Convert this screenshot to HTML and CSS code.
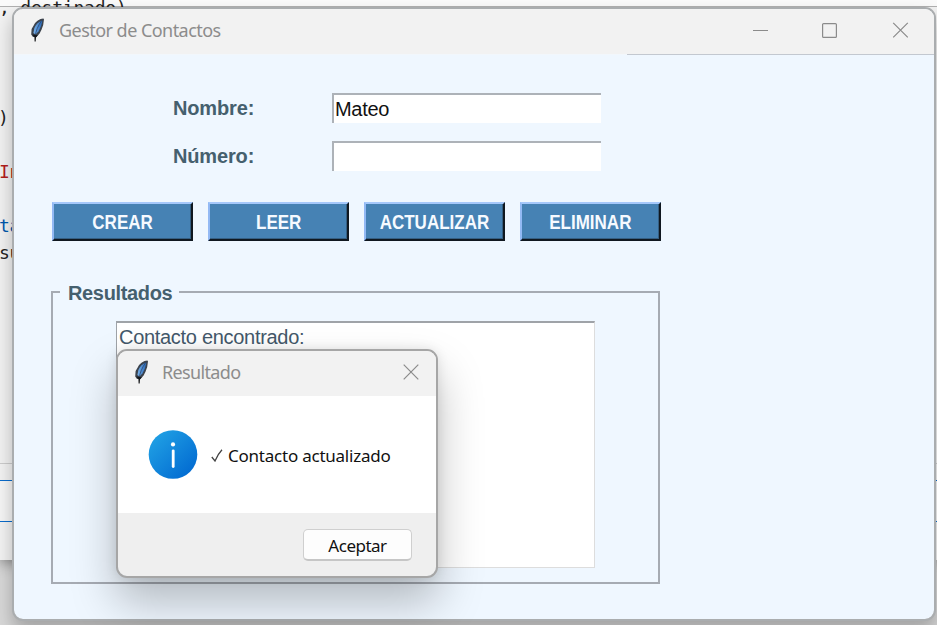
FILE: index.html
```html
<!DOCTYPE html>
<html lang="es">
<head>
<meta charset="utf-8">
<title>Gestor de Contactos</title>
<link rel="stylesheet" href="styles.css">
</head>
<body>
<svg width="0" height="0" class="defs">
  <defs>
    <linearGradient id="info" x1="0" y1="0" x2="1" y2="1"><stop offset="0.1" stop-color="#20a0e4"/><stop offset="0.95" stop-color="#0067d0"/></linearGradient>
    <linearGradient id="blue" x1="0" y1="0" x2="1" y2="0"><stop offset="0" stop-color="#79b2ea"/><stop offset="1" stop-color="#2868b8"/></linearGradient>
    <symbol id="feather" viewBox="0 0 16 24">
      <path d="M13.4 .6 C9.5 .8 5.8 3.5 3.8 7.2 L1.6 11 L1.2 16.5 L3 19 L6.5 19 L9.6 15.5 L11.6 11.5 L13.2 7 L14 1.2Z" fill="#3c434d"/>
      <path d="M12.2 2.4 C8.5 3.8 5.5 6.8 4.4 10 L3.4 15 L5.5 16.6 L8.6 13.2 L10.9 8.5 L12.2 3.8Z" fill="url(#blue)"/>
      <path d="M11.6 2.6 C8 8 5.6 13 5.1 19" fill="none" stroke="#253c60" stroke-width=".7"/>
      <path d="M2.2 16.6 L4.4 19 L4.6 23.6 L5.7 23.6 L6 19.5 L7.8 17.2Z" fill="#15171a"/>
    </symbol>
    <symbol id="close" viewBox="0 0 16 16"><path d="M.7 .7 L15.3 15.3 M15.3 .7 L.7 15.3" fill="none" stroke="#8b8b8b" stroke-width="1.2"/></symbol>
  </defs>
</svg>
<div class="desktop">
  <div class="editor">
    <div class="tabs"></div>
    <div class="code">
      <span class="ln l1">, destinado)</span>
      <span class="ln l2">)</span>
      <span class="ln l3">In</span>
      <span class="ln l4">ta</span>
      <span class="ln l5">su</span>
    </div>
    <div class="bar"></div>
    <div class="prompt"></div>
    <div class="status"></div>
  </div>

  <main class="window main-window">
    <header class="titlebar">
      <svg class="feather"><use href="#feather"/></svg>
      <span class="title">Gestor de Contactos</span>
      <svg class="controls" viewBox="0 0 156 16">
        <path d="M0 8.5H15" stroke="#8b8b8b"/>
        <rect x="69.6" y="1.6" width="13.8" height="13.8" rx="1" fill="none" stroke="#8b8b8b" stroke-width="1.2"/>
        <path d="M140.2 .8 L154.8 15.4 M154.8 .8 L140.2 15.4" stroke="#8b8b8b" stroke-width="1.2"/>
      </svg>
    </header>
    <div class="form">
      <label class="label">Nombre:</label><div class="entry">Mateo</div>
      <label class="label">Número:</label><div class="entry"></div>
    </div>
    <div class="buttons">
      <div class="btn"><span>CREAR</span></div>
      <div class="btn"><span>LEER</span></div>
      <div class="btn"><span>ACTUALIZAR</span></div>
      <div class="btn"><span>ELIMINAR</span></div>
    </div>
    <section class="group">
      <div class="legend"><span>Resultados</span></div>
      <div class="output">Contacto encontrado:</div>
    </section>
  </main>

  <div class="window dialog">
    <header class="titlebar">
      <svg class="feather"><use href="#feather"/></svg>
      <span class="title">Resultado</span>
      <svg class="x"><use href="#close"/></svg>
    </header>
    <div class="message">
      <svg class="info" viewBox="0 0 50 50">
        <circle cx="25" cy="24.5" r="24.3" fill="url(#info)"/>
        <circle cx="25" cy="14.4" r="2.1" fill="#fff"/>
        <path d="M25.2 20.8V36.6" stroke="#fff" stroke-width="2.8" stroke-linecap="round"/>
      </svg>
      <svg class="check" viewBox="0 0 12 13"><path d="M.8 8 L4 12 C5.6 8 7.7 4.2 11 .7" fill="none" stroke="#444" stroke-width="1.3"/></svg>
      <span>Contacto actualizado</span>
    </div>
    <footer class="actions"><div class="accept"><span>Aceptar</span></div></footer>
  </div>
</div>
</body>
</html>
```
FILE: styles.css
```css
* { box-sizing: border-box; }
body { margin: 0; overflow: hidden; font-family: "Liberation Sans", sans-serif; }
.defs { position: absolute; }
.desktop { position: relative; width: 937px; height: 625px; overflow: hidden; background: #d8d8d8; }
.editor { height: 560px; display: flex; flex-direction: column; background: #f3f3f3; box-shadow: 0 2px 14px rgba(0,0,0,.45); }
.tabs { height: 7px; background: #fafafa; border-bottom: 1px solid #b0b0b0; }
.code { height: 457px; position: relative; background: #f2f2f2; border-bottom: 1px solid #ccc; font: 18px/22px "DejaVu Sans Mono", monospace; color: #222; }
.ln { position: absolute; left: -1px; white-space: pre; letter-spacing: -.3px; }
.l1 { top: -10px; left: -1px; letter-spacing: -.2px; }
.l2 { top: 100px; left: -2px; }
.l3 { top: 154px; color: #b31d1d; }
.l4 { top: 208px; color: #0059ad; }
.l5 { top: 235px; }
.bar { height: 16px; background: #f3f3f3; }
.prompt { height: 42px; background: #f6f6f6; border: solid #0a6ccc; border-width: 1px 0; }
.status { flex: 1; background: #f3f3f3; }

.window { position: absolute; background-clip: padding-box; overflow: hidden; }
.main-window { left: 12px; top: 7px; width: 924px; height: 614px; border: 2px solid #aaadaf; border-radius: 11px; background-color: #eff7ff; box-shadow: 0 10px 18px rgba(0,0,0,.25); }
.titlebar { display: flex; align-items: center; background: #f2f2f2; font-family: "Noto Sans", sans-serif; color: #8c8c8c; }
.main-window .titlebar { height: 46px; padding: 0 25px 4px 16px; border-bottom: 1px solid; border-image: linear-gradient(90deg, #f2f7fc 613px, #c3c8d0 613px) 1; }
.feather { width: 16px; height: 24px; flex: none; }
.title { white-space: nowrap; }
.main-window .title { font-size: 18px; margin-left: 13px; letter-spacing: -.54px; }
.controls { width: 156px; height: 16px; margin-left: auto; }

.form { display: grid; grid-template-columns: 159px 269px; grid-auto-rows: 30px; row-gap: 18px; padding: 38px 0 0 159px; }
.label { font-size: 20px; font-weight: bold; line-height: 31px; letter-spacing: -.15px; color: #45606e; }
.entry { background: #fff; border: solid #adb2b8; border-width: 2px 0 0 2px; padding-left: 1px; font-size: 20px; line-height: 28px; letter-spacing: -.3px; color: #111; }
.buttons { display: flex; gap: 15px; padding: 31px 0 0 38px; }
.btn { width: 141px; height: 39px; background: #4682b4; border: 2px solid; border-color: #a5c8fb #101820 #101820 #93b9f4; box-shadow: inset -1px -1px #355f83; color: #f6faff; font-size: 20px; font-weight: bold; line-height: 36px; display: flex; justify-content: center; }
.btn span { transform: scaleX(.85); }
.group { width: 609px; height: 293px; margin: 50px 0 0 37px; border: 2px solid #a6abb3; }
.legend { height: 28px; padding-left: 7px; }
.legend span { display: block; position: relative; top: -12px; width: 119px; padding: 0 8px; background: #eff7ff; font-size: 20px; line-height: 24px; font-weight: bold; letter-spacing: -.35px; white-space: nowrap; color: #45606e; }
.output { width: 479px; height: 247px; margin-left: 63px; padding: 1px 2px; background: #fff; border: solid #9fa3a8; border-width: 2px 1px 1px 1px; border-right-color: #ddd; border-bottom-color: #ddd; font-size: 20px; line-height: 26px; letter-spacing: -.3px; color: #43586a; }

.dialog { left: 116px; top: 349px; width: 322px; height: 229px; border: 2px solid #a6a6a6; border-radius: 11px; background-color: #efefef; box-shadow: 0 24px 45px rgba(0,0,0,.25), 0 0 12px rgba(0,0,0,.1); }
.dialog .titlebar { height: 45px; padding: 0 17px 3px 16px; }
.dialog .title { margin-left: 12px; font-size: 18px; letter-spacing: -.65px; }
.x { width: 16px; height: 16px; margin-left: auto; }
.message { height: 117px; background: #fff; display: flex; align-items: center; padding-left: 30px; font: 17px/22px "Noto Sans", sans-serif; letter-spacing: -.23px; color: #111; }
.info { width: 50px; height: 50px; }
.check { width: 12px; height: 13px; margin: 2px 5px 0 13px; }
.message span { white-space: nowrap; margin-top: 3px; }
.actions { padding: 16px 24px 0; display: flex; justify-content: flex-end; }
.accept { width: 109px; height: 32px; border: 1px solid #cfcfcf; border-bottom: 2px solid #c6c6c6; border-radius: 5px; background: #fdfdfd; text-align: center; font: 17px/32px "Noto Sans", sans-serif; letter-spacing: -.5px; color: #111; }
```
